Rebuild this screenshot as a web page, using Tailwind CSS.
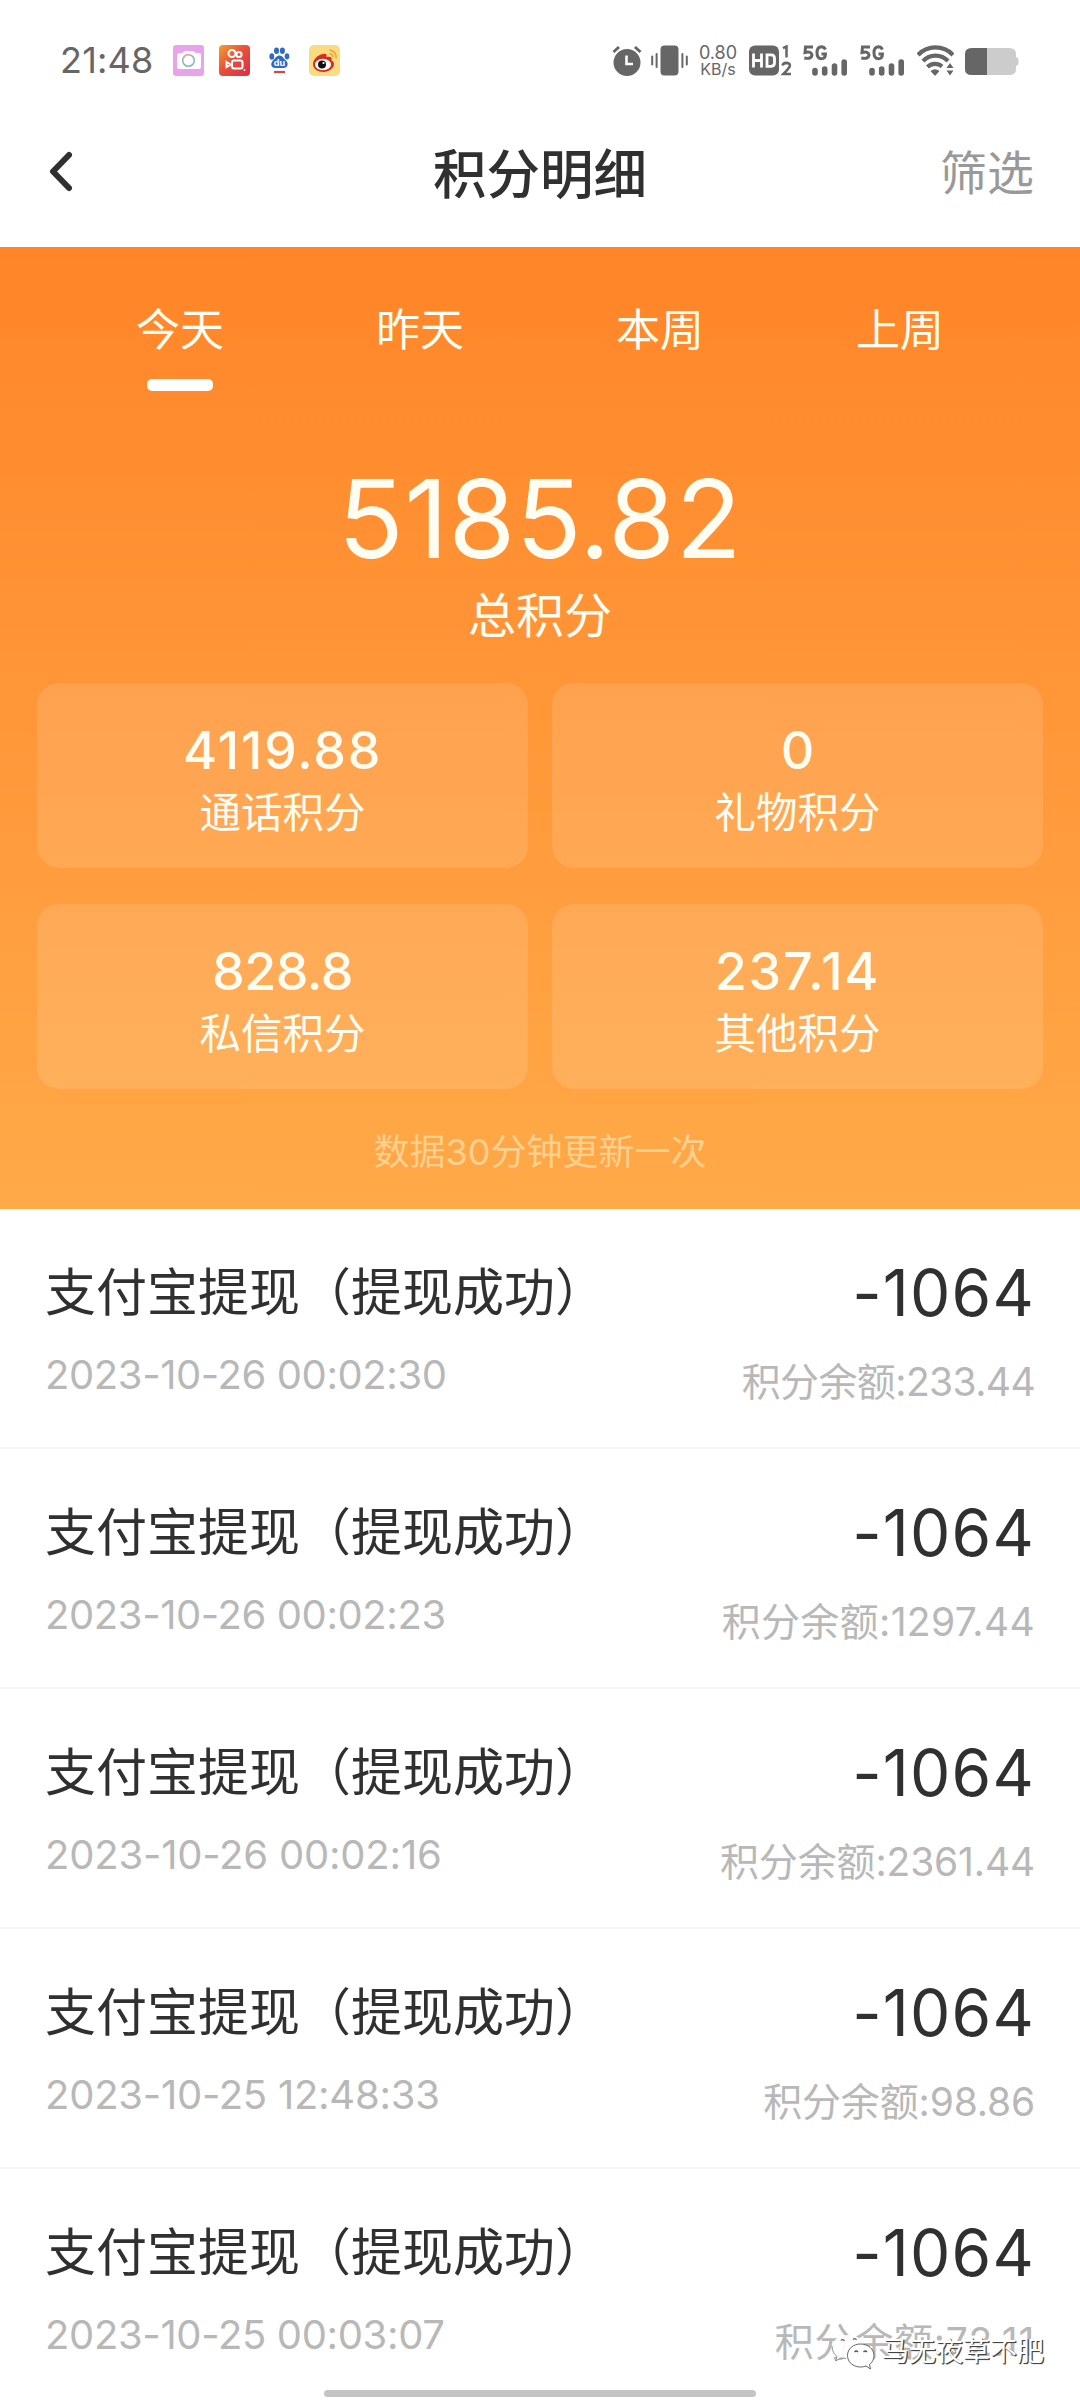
<!DOCTYPE html>
<html lang="zh-CN">
<head>
<meta charset="utf-8">
<title>积分明细</title>
<script src="https://cdn.jsdelivr.net/npm/@tailwindcss/browser@4"></script>
</head>
<body class="bg-white">
<div class="relative flex h-[2400px] w-[1080px] flex-col overflow-hidden bg-white font-['Inter','Noto_Sans_CJK_SC',sans-serif] text-[#303030]">

  <!-- Status bar -->
  <header class="flex h-[120px] shrink-0 items-center pl-[60px] text-[#666]">
    <span class="w-[113px] text-[36px] leading-none tracking-[0.2px]">21:48</span>
    <svg class="size-[31px]" viewBox="0 0 31 31"><rect width="31" height="31" rx="3" fill="#e9a3ea"/><path d="M4 10q0-2 2-2h3l3-2h8l3 2h3q2 0 2 2v12q0 2-2 2H6q-2 0-2-2z" fill="#fff"/><circle cx="15.500" cy="15.500" r="5.800" fill="#fff" stroke="#8bb3c4" stroke-width="1.500"/><path d="M10 14a6 6 0 0 1 6-4.500" stroke="#e5b0a0" stroke-width="1.500" fill="none"/></svg>
    <svg class="ml-[15px] size-[31px]" viewBox="0 0 31 31"><defs><linearGradient id="ks" x1="0" y1="0" x2="1" y2="1"><stop offset="0" stop-color="#f5a02c"/><stop offset=".45" stop-color="#e8523a"/><stop offset="1" stop-color="#dc2b45"/></linearGradient></defs><rect width="31" height="31" rx="4" fill="url(#ks)"/><g fill="none" stroke="#fff" stroke-width="2"><circle cx="13" cy="8.500" r="3.500"/><circle cx="20" cy="9.500" r="2.600"/><rect x="13" y="15.500" width="10.500" height="8" rx="2"/><path d="M12 19.500l-4.500-2.500v5z"/></g><circle cx="25.500" cy="25" r=".9" fill="#fff"/></svg>
    <svg class="ml-[19px] h-[28px] w-[21px]" viewBox="0 0 21 28"><g fill="#2f6bc4"><ellipse cx="2.800" cy="10.500" rx="2.400" ry="3.200"/><ellipse cx="7.500" cy="4.800" rx="2.500" ry="3.300"/><ellipse cx="13.400" cy="4.800" rx="2.500" ry="3.300"/><ellipse cx="18" cy="10.300" rx="2.300" ry="3.100"/><path d="M10.500 9.500c3 0 4 3 6.500 5s2.500 7.500-2.500 7.500h-8c-5 0-5.200-5-2.500-7.500s3.500-5 6.500-5z"/></g><text x="10.500" y="20" text-anchor="middle" font-family="Inter" font-weight="700" font-size="9" fill="#fff">du</text><path d="M5 26h11" stroke="#cf4747" stroke-width="2.200"/></svg>
    <svg class="ml-[19px] size-[31px]" viewBox="0 0 31 31"><rect width="31" height="31" rx="5" fill="#f9dc82"/><path d="M14 9c-6 1-10 6-10 10.500C4 24 9 27 14.500 27S25 23 25 19c0-2-1-3-2.500-3.500C23.500 12 21 11 17.500 12 18 9 17 8 14 9z" fill="#d92b1e"/><ellipse cx="14" cy="19.500" rx="8" ry="5.700" fill="#fff"/><circle cx="13" cy="19.500" r="4" fill="#111"/><circle cx="14.500" cy="18" r="1.100" fill="#fff"/><g fill="none" stroke="#eda13a" stroke-width="1.600"><path d="M20.500 5a7 7 0 0 1 6.500 8.500"/><path d="M20.500 8.500a3.800 3.800 0 0 1 3.300 4"/></g></svg>

    <div class="ml-[272px] flex items-center">
      <svg class="h-[31px] w-[30px]" viewBox="0 0 30 31"><circle cx="15" cy="17.500" r="13.500" fill="#666"/><path d="M1.500 7L7 2M28.500 7L23 2" stroke="#666" stroke-width="3"/><path d="M14.500 10.500v8.500h6.500" fill="none" stroke="#fff" stroke-width="2.600"/></svg>
      <svg class="ml-[9px] h-[31px] w-[37px]" viewBox="0 0 37 31"><rect x="9.500" y=".5" width="18" height="30" rx="4" fill="#666"/><path d="M1.200 11.500v8M5.600 9v13M31.400 9v13M35.800 11.500v8" stroke="#666" stroke-width="2" stroke-linecap="round"/></svg>
      <div class="ml-[11px] flex w-[38px] flex-col items-center leading-none">
        <span class="text-[18px] leading-[18px]">0.80</span>
        <span class="text-[16px] leading-[15px]">KB/s</span>
      </div>
      <svg class="ml-[12px] h-[31px] w-[43px]" viewBox="0 0 43 31"><rect y=".5" width="30" height="30" rx="6" fill="#666"/><path d="M4.500 8.500v14M12.500 8.500v14M4.500 15.500h8M18 9.800h4q3.500 0 3.500 3.500v4.500q0 3.500-3.500 3.500h-4z" fill="none" stroke="#fff" stroke-width="2.800"/><path d="M34 3.200l3.500-1.700v11" fill="none" stroke="#666" stroke-width="2.500"/><path d="M33.500 20.500q.5-2.700 4-2.700 3.800.2 3.300 3.200-.5 2-6.300 8h7.500" fill="none" stroke="#666" stroke-width="2.700"/></svg>
      <svg class="ml-[11px] h-[31px] w-[46px]" viewBox="0 0 46 31"><path d="M10 2H2.500L2 7.500q6.500-1.500 7 2.500-.5 4.500-7.700 3M22.500 4.500q-1.500-2.700-4-2.700-4.500.2-4.500 6t4.300 6q4 0 4.200-4.800h-4" fill="none" stroke="#666" stroke-width="3"/><path d="M12 25.500v2.500M21.700 24v4M31.500 21v7M41.200 17v11" stroke="#666" stroke-width="5.600" stroke-linecap="round"/></svg>
      <svg class="ml-[11px] h-[31px] w-[46px]" viewBox="0 0 46 31"><path d="M10 2H2.500L2 7.500q6.500-1.500 7 2.500-.5 4.500-7.700 3M22.500 4.500q-1.500-2.700-4-2.700-4.500.2-4.500 6t4.300 6q4 0 4.200-4.800h-4" fill="none" stroke="#666" stroke-width="3"/><path d="M12 25.500v2.500M21.700 24v4M31.500 21v7M41.200 17v11" stroke="#666" stroke-width="5.600" stroke-linecap="round"/></svg>
      <svg class="ml-[11px] h-[31px] w-[37px]" viewBox="0 0 37 31"><g fill="none" stroke="#666" stroke-width="4.200"><path d="M1 10a24 24 0 0 1 35 0"/><path d="M6 16.200a17 17 0 0 1 25-.2"/><path d="M10.500 22a10.500 10.500 0 0 1 14.500-.5"/></g><path d="M13.500 26q4.500-3.500 9 0L18 31z" fill="#666"/><path d="M29.500 23l3.500-5 3.500 5zM29.500 25.500l3.500 5 3.500-5z" fill="#666"/></svg>
      <svg class="ml-[11px] h-[31px] w-[54px]" viewBox="0 0 54 31"><path d="M7 3h37q7 0 7 6v3q2.500.5 2.500 3v3q0 2.500-2.500 3v3q0 6-7 6H7q-7 0-7-6V9q0-6 7-6z" fill="#ccc"/><path d="M7 3h15v27H7q-7 0-7-6V9q0-6 7-6z" fill="#666"/></svg>
    </div>
  </header>

  <!-- Title bar -->
  <nav class="grid h-[127px] shrink-0 grid-cols-3 items-center px-[46px] pb-[24px]">
    <svg class="h-[42px] w-[30px]" viewBox="0 0 30 42" fill="none" stroke="#303030" stroke-width="6" stroke-linecap="round" stroke-linejoin="round"><path d="M23 4L7 20.500l16 16.500"/></svg>
    <h1 class="whitespace-nowrap pt-[7px] text-center text-[53.500px] font-medium leading-none">积分明细</h1>
    <span class="pt-[2px] text-right text-[47px] leading-none text-[#999]">筛选</span>
  </nav>

  <!-- Summary -->
  <section class="flex h-[962px] shrink-0 flex-col items-center bg-linear-to-b from-[#ff8528] to-[#ffa948] text-[#fffdf2]">
    <div class="grid w-[960px] grid-cols-4 pt-[61px] text-center text-[44px] leading-[44px]">
      <div class="flex flex-col items-center"><span>今天</span><i class="mt-[27px] block h-[12px] w-[66px] rounded-[5px] bg-white"></i></div>
      <span>昨天</span><span>本周</span><span>上周</span>
    </div>
    <strong class="mt-[73px] text-[108px] font-normal leading-[110px] tracking-[0.5px]">5185.82</strong>
    <span class="mt-[18px] text-[48px] leading-[48px]">总积分</span>
    <div class="mt-[43px] grid grid-cols-[491px_491px] gap-x-[24px] gap-y-[36px] text-center">
      <div class="flex h-[185px] flex-col items-center rounded-[22px] bg-white/12 pt-[42px]"><b class="text-[52px] font-medium leading-[52px] tracking-[1.7px]">4119.88</b><span class="mt-[15px] text-[41.500px] leading-[42px]">通话积分</span></div>
      <div class="flex h-[185px] flex-col items-center rounded-[22px] bg-white/12 pt-[42px]"><b class="text-[52px] font-medium leading-[52px]">0</b><span class="mt-[15px] text-[41.500px] leading-[42px]">礼物积分</span></div>
      <div class="flex h-[185px] flex-col items-center rounded-[22px] bg-white/12 pt-[42px]"><b class="text-[52px] font-medium leading-[52px] tracking-[-0.5px]">828.8</b><span class="mt-[15px] text-[41.500px] leading-[42px]">私信积分</span></div>
      <div class="flex h-[185px] flex-col items-center rounded-[22px] bg-white/12 pt-[42px]"><b class="text-[52px] font-medium leading-[52px] tracking-[1.8px]">237.14</b><span class="mt-[15px] text-[41.500px] leading-[42px]">其他积分</span></div>
    </div>
    <span class="mt-[43px] text-[36px] leading-[40px] text-[#ffd08e]">数据30分钟更新一次</span>
  </section>

  <!-- Records -->
  <ul class="flex flex-col">
    <li class="flex h-[240px] shrink-0 justify-between border-b-2 border-[#f5f5f5] px-[45px]">
      <div class="flex flex-col pt-[58px]"><span class="text-[51px] leading-[52px]">支付宝提现（提现成功）</span><time class="mt-[36px] text-[40px] leading-[40px] tracking-[-0.4px] text-[#b8b8b8]">2023-10-26 00:02:30</time></div>
      <div class="flex flex-col items-end pt-[52px]"><span class="text-[64px] leading-[64px] tracking-[1.2px]">-1064</span><span class="mt-[37px] text-[39px] leading-[40px] tracking-[-0.6px] text-[#b8b8b8]">积分余额:233.44</span></div>
    </li>
    <li class="flex h-[240px] shrink-0 justify-between border-b-2 border-[#f5f5f5] px-[45px]">
      <div class="flex flex-col pt-[58px]"><span class="text-[51px] leading-[52px]">支付宝提现（提现成功）</span><time class="mt-[36px] text-[40px] leading-[40px] tracking-[-0.4px] text-[#b8b8b8]">2023-10-26 00:02:23</time></div>
      <div class="flex flex-col items-end pt-[52px]"><span class="text-[64px] leading-[64px] tracking-[1.2px]">-1064</span><span class="mt-[37px] text-[39px] leading-[40px] tracking-[0.35px] text-[#b8b8b8]">积分余额:1297.44</span></div>
    </li>
    <li class="flex h-[240px] shrink-0 justify-between border-b-2 border-[#f5f5f5] px-[45px]">
      <div class="flex flex-col pt-[58px]"><span class="text-[51px] leading-[52px]">支付宝提现（提现成功）</span><time class="mt-[36px] text-[40px] leading-[40px] tracking-[-0.2px] text-[#b8b8b8]">2023-10-26 00:02:16</time></div>
      <div class="flex flex-col items-end pt-[52px]"><span class="text-[64px] leading-[64px] tracking-[1.2px]">-1064</span><span class="mt-[37px] text-[39px] leading-[40px] tracking-[-0.15px] text-[#b8b8b8]">积分余额:2361.44</span></div>
    </li>
    <li class="flex h-[240px] shrink-0 justify-between border-b-2 border-[#f5f5f5] px-[45px]">
      <div class="flex flex-col pt-[58px]"><span class="text-[51px] leading-[52px]">支付宝提现（提现成功）</span><time class="mt-[36px] text-[40px] leading-[40px] tracking-[-0.25px] text-[#b8b8b8]">2023-10-25 12:48:33</time></div>
      <div class="flex flex-col items-end pt-[52px]"><span class="text-[64px] leading-[64px] tracking-[1.2px]">-1064</span><span class="mt-[37px] text-[39px] leading-[40px] tracking-[-0.15px] text-[#b8b8b8]">积分余额:98.86</span></div>
    </li>
    <li class="flex h-[231px] shrink-0 justify-between px-[45px]">
      <div class="flex flex-col pt-[58px]"><span class="text-[51px] leading-[52px]">支付宝提现（提现成功）</span><time class="mt-[36px] text-[40px] leading-[40px] tracking-[-0.35px] text-[#b8b8b8]">2023-10-25 00:03:07</time></div>
      <div class="flex flex-col items-end pt-[52px]"><span class="text-[64px] leading-[64px] tracking-[1.2px]">-1064</span><span class="mt-[37px] text-[39px] leading-[40px] tracking-[0.75px] text-[#b8b8b8]">积分余额:72.11</span></div>
    </li>
  </ul>

  <!-- Account watermark -->
  <div class="absolute top-[2334px] right-[36px] flex items-center gap-[7px]">
    <svg class="h-[36px] w-[45px]" viewBox="0 0 45 36"><path d="M18 1C8 1 2 7 2 13.500c0 4 2 7 5 9l-1.500 4.500 5.500-3q3 1 7 1C28 25 34 20 34 13S28 1 18 1z" fill="#fff" fill-opacity=".92"/><path d="M2 12c0 5 2 8 5 10.500L5.500 27l5.500-3 5 .5" fill="none" stroke="#777" stroke-width=".8"/><path d="M11 6.500q2-2 3.500.5M23 5.500q2-2 3.500.5" fill="none" stroke="#666" stroke-width="1.300"/><path d="M30.500 10C23 10 17.500 15 17.500 21.500S23 33 30.500 33q3 0 5.500-1l4.500 3-1-4.500c3-2 4.500-5.500 4.500-9C44 15 38 10 30.500 10z" fill="#fff" stroke="#555" stroke-width=".9"/><path d="M24.500 18q1.800-2 3.500 0M33.500 18q1.800-2 3.500 0" fill="none" stroke="#555" stroke-width="1.300"/></svg>
    <span class="text-[27px] leading-[36px] text-white [text-shadow:1px_1px_0_#444,1px_1px_1px_#333]">马无夜草不肥</span>
  </div>

  <!-- Home indicator -->
  <div class="absolute bottom-[3px] left-[324px] h-[7px] w-[432px] rounded-full bg-[#c4c4c4]"></div>
</div>
</body>
</html>
